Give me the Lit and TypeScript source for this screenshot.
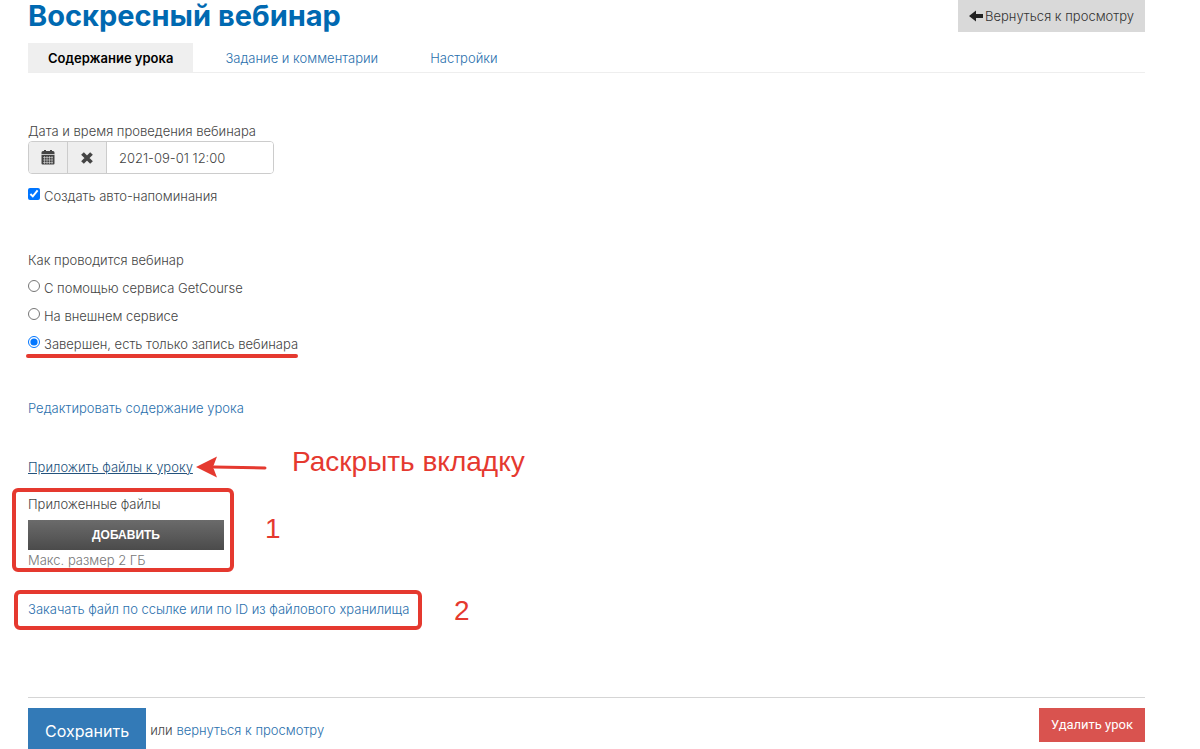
import { LitElement, html, css } from "lit";
import { customElement, state } from "lit/decorators.js";

@customElement("app-root")
export class AppRoot extends LitElement {
  static styles = css`
    :host {
      display: block;
      background: #fff;
      color: #444;
      font: 300 13px/20px Inter, "Liberation Sans", sans-serif;
    }
    * { box-sizing: border-box; }
    .page { padding: 0 55px 0 28px; }
    a { color: #2a70ad; text-decoration: none; }
    button { font: inherit; border: 0; border-radius: 0; cursor: pointer; margin: 0; }
    input { margin: 0; font: inherit; }
    .head { display: flex; justify-content: space-between; align-items: flex-start; height: 43px; }
    h1 { margin: 0; font-size: 29px; line-height: 32px; font-weight: 700; color: #0069b1; }
    .back {
      display: flex; align-items: center; gap: 2px; height: 32px;
      padding: 0 11px; background: #d9d9d9; color: #333;
    }
    .tabs { display: flex; gap: 12px; border-bottom: 1px solid #eee; }
    .tab { padding: 5px 20px 4px; }
    .tab.active { background: #efefef; color: #000; font-weight: 600; }
    .field { margin-top: 48px; }
    .caption { display: block; margin: 0; padding: 0; }
    .group { display: flex; width: 246px; height: 33px; border: 1px solid #ccc; border-radius: 4px; overflow: hidden; }
    .addon {
      display: flex; align-items: center; justify-content: center; width: 39px; flex: none;
      padding: 0; background: #eee; border-right: 1px solid #ccc; color: #444;
    }
    .date { flex: 1; min-width: 0; border: 0; padding: 0 12px; color: #444; background: #fff; outline: none; }
    .option { display: flex; gap: 4px; align-items: flex-start; position: relative; width: max-content; }
    .option input { width: 12px; height: 12px; margin-top: 2px; accent-color: #0075ff; }
    .remind { margin-top: 12px; }
    fieldset { border: 0; margin: 44px 0 0; padding: 0; min-width: 0; }
    .options { display: flex; flex-direction: column; gap: 8px; margin-top: 8px; }
    .row { position: relative; width: max-content; }
    .edit { margin-top: 44px; }
    .attach { margin-top: 39px; }
    .attach a { color: #23527c; text-decoration: underline; }
    .files { margin-top: 17px; width: 196px; position: relative; }
    .add {
      display: block; width: 100%; height: 30px; margin-top: 6px; color: #fff;
      font: 700 12px/30px "Liberation Sans", sans-serif; padding: 0;
      background: linear-gradient(#6b6b6b, #4b4b4b);
    }
    .hint { color: #777; }
    .upload { margin-top: 29px; }
    .foot {
      display: flex; justify-content: space-between; align-items: flex-start;
      margin-top: 78px; border-top: 1px solid #d5d5d5; padding-top: 10px;
    }
    .left { display: flex; gap: 4px; }
    .save { background: #337ab7; color: #fff; font-size: 16px; line-height: 22px; padding: 12px 17px 7px; font-weight: 400; }
    .or { padding-top: 12px; }
    .remove { height: 34px; background: #d9534f; color: #fff; padding: 0 12px; font-family: Roboto, sans-serif; font-weight: 400; }
    .mark { position: absolute; pointer-events: none; }
    .frame { border: 4px solid #e5392f; border-radius: 6px; }
    .underline { left: -2px; top: 20px; width: 272px; height: 4px; border-radius: 2px; background: #e5392f; }
    .files .frame { left: -16px; top: -6px; width: 222px; height: 84px; }
    .upload .frame { left: -14px; top: -9px; width: 408px; height: 40px; }
    .arrow { left: 168px; top: -2px; }
    .note { color: #e5392f; font: 400 28px/30px "Liberation Sans", sans-serif; white-space: nowrap; }
    .open { left: 264px; top: -10px; }
    .one { left: 237px; top: 20px; }
    .two { left: 426px; top: -3px; }
  `;

  @state() private mode = 2;

  private modes = [
    "С помощью сервиса GetCourse",
    "На внешнем сервисе",
    "Завершен, есть только запись вебинара",
  ];

  render() {
    return html`
      <main class="page">
        <header class="head">
          <h1>Воскресный вебинар</h1>
          <button class="back">
            <svg width="14" height="12" viewBox="0 0 14 12"><path d="M0 6 7 0.500V4H14V8H7V11.500Z" fill="#222" /></svg>
            Вернуться к просмотру
          </button>
        </header>
        <nav class="tabs">
          <a class="tab active" href="#content">Содержание урока</a>
          <a class="tab" href="#task">Задание и комментарии</a>
          <a class="tab" href="#settings">Настройки</a>
        </nav>

        <section class="field">
          <label class="caption" for="date">Дата и время проведения вебинара</label>
          <div class="group">
            <button class="addon" aria-label="Календарь">
              <svg width="14" height="15" viewBox="0 0 14 15">
                <path d="M2 1h1V0h2v1h4V0h2v1h1q1.500 0 1.500 1.500V4H.5V2.500Q.5 1 2 1Z" fill="#444" />
                <path d="M.5 4.600h13v9q0 1-1 1h-11q-1 0-1-1Z" fill="#444" />
                <path d="M.5 4.500h13M2 7.500h10M2 10h10M2 12.500h10M3.500 6v8M6 6v8M8.500 6v8M11 6v8" stroke="#eee" stroke-width=".5" />
              </svg>
            </button>
            <button class="addon" aria-label="Очистить">
              <svg width="14" height="14" viewBox="0 0 14 14"><path d="M2.500 2.500 11.500 11.500M11.500 2.500 2.500 11.500" stroke="#444" stroke-width="3.800" /></svg>
            </button>
            <input class="date" id="date" type="text" value="2021-09-01 12:00" />
          </div>
          <label class="option remind"><input type="checkbox" checked />Создать авто-напоминания</label>
        </section>

        <fieldset>
          <legend class="caption">Как проводится вебинар</legend>
          <div class="options">
            ${this.modes.map(
              (text, i) => html`<label class="option">
                <input type="radio" name="mode" .checked=${this.mode === i} @change=${() => (this.mode = i)} />${text}
                ${i === 2 ? html`<span class="mark underline"></span>` : ""}
              </label>`
            )}
          </div>
        </fieldset>

        <div class="row edit"><a href="#edit">Редактировать содержание урока</a></div>
        <div class="row attach">
          <a href="#attach">Приложить файлы к уроку</a>
          <svg class="mark arrow" width="72" height="24" viewBox="0 0 72 24">
            <path d="M18 12 69 13" stroke="#e5392f" stroke-width="3" stroke-linecap="round" />
            <path d="M0 12 21 1.500 17 12 21 22.500Z" fill="#e5392f" />
          </svg>
          <span class="mark note open">Раскрыть вкладку</span>
        </div>

        <section class="files">
          <div>Приложенные файлы</div>
          <button class="add">ДОБАВИТЬ</button>
          <div class="hint">Макс. размер 2 ГБ</div>
          <span class="mark frame"></span>
          <span class="mark note one">1</span>
        </section>
        <div class="row upload">
          <a href="#upload">Закачать файл по ссылке или по ID из файлового хранилища</a>
          <span class="mark frame"></span>
          <span class="mark note two">2</span>
        </div>

        <footer class="foot">
          <div class="left">
            <button class="save">Сохранить</button>
            <span class="or">или <a href="#view">вернуться к просмотру</a></span>
          </div>
          <button class="remove">Удалить урок</button>
        </footer>
      </main>
    `;
  }
}
